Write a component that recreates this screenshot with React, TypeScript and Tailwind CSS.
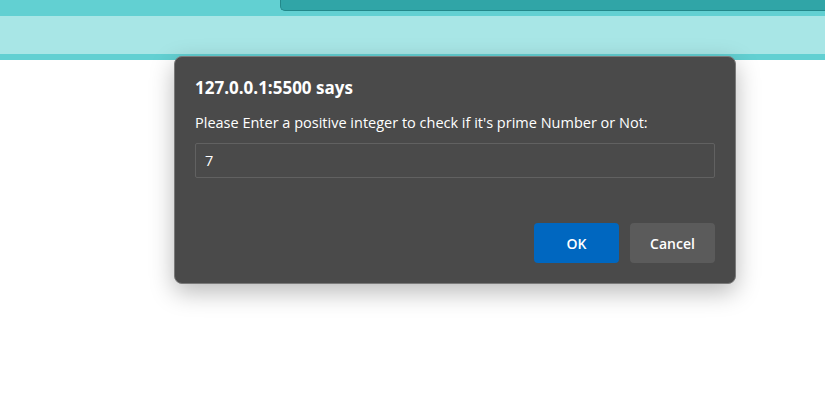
import React from 'react';

const App: React.FC = () => {
  return (
    <div className="relative w-full h-[412px] bg-white overflow-hidden" style={{ fontFamily: '"Open Sans", "Noto Sans", sans-serif' }}>
      {/* Page header behind the prompt */}
      <div className="h-[16px] bg-[#62d0d2] flex">
        <div className="ml-[280px] flex-1 h-[11px] bg-[#30a5a7] rounded-bl-[5px] border-b border-l border-[#23888a]" />
      </div>
      <div className="h-[38px] bg-[#a8e6e6]" />
      <div className="h-[6px] bg-[#62d0d2]" />

      {/* Prompt dialog */}
      <div className="absolute left-[174px] top-[56px] w-[562px] h-[228px] bg-[#4a4a4a] rounded-[8px] border border-[#7a7a7a] shadow-[0_8px_24px_rgba(0,0,0,0.28)] px-[20px] pt-[19px] flex flex-col">
        <div className="text-white text-[17px] font-bold leading-[24px]">127.0.0.1:5500 says</div>
        <div className="mt-[13px] text-white text-[14.5px] leading-[20px]">
          Please Enter a positive integer to check if it's prime Number or Not:
        </div>
        <div className="mt-[10px] h-[35px] border border-[#616161] rounded-[2px] flex items-center px-[9px] text-white text-[14.5px]">
          7
        </div>
        <div className="mt-[45px] flex justify-end gap-[11px]">
          <button className="w-[85px] h-[40px] rounded-[4px] bg-[#0067c0] text-white text-[14px] font-semibold">OK</button>
          <button className="w-[85px] h-[40px] rounded-[4px] bg-[#5b5b5b] text-white text-[14px] font-semibold">Cancel</button>
        </div>
      </div>
    </div>
  );
};

export default App;
